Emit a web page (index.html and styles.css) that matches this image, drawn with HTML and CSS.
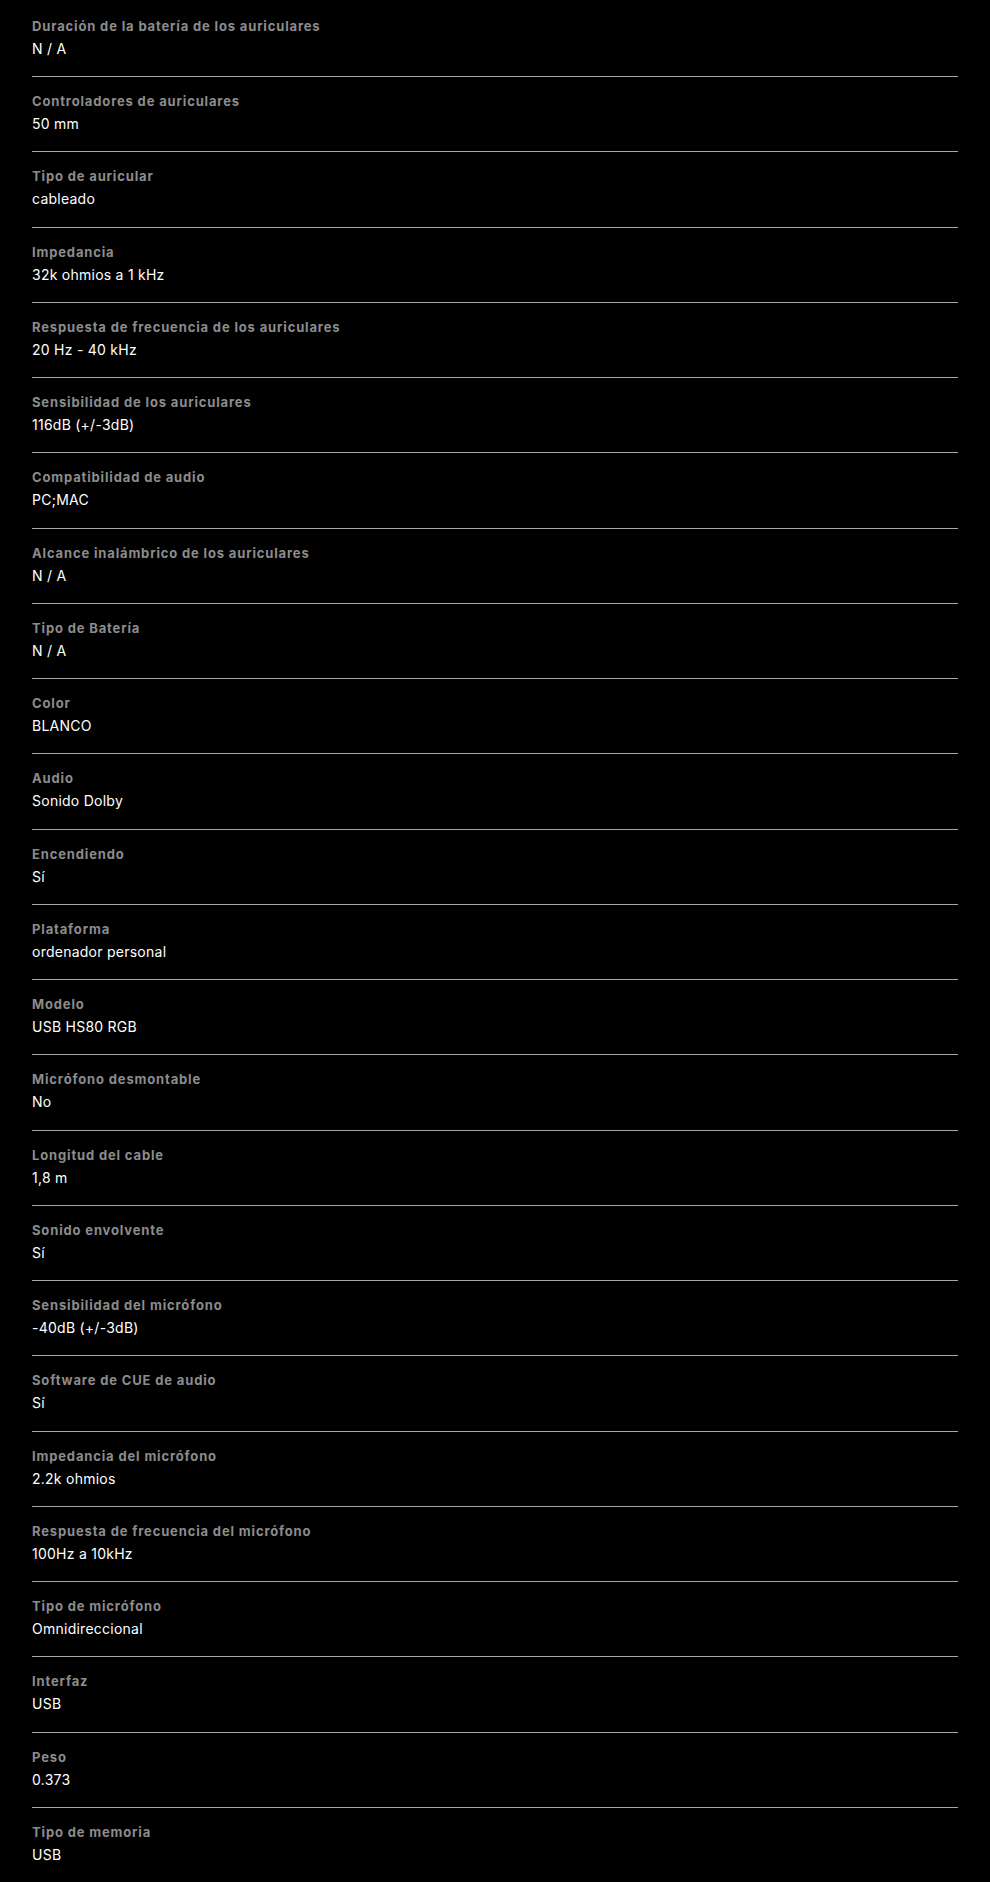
FILE: index.html
```html
<!DOCTYPE html>
<html lang="es">
<head>
<meta charset="utf-8">
<title>Especificaciones</title>
<link rel="stylesheet" href="styles.css">
</head>
<body>
<dl class="specs">
  <div class="row"><dt>Duración de la batería de los auriculares</dt><dd>N / A</dd></div>
  <div class="row"><dt>Controladores de auriculares</dt><dd>50 mm</dd></div>
  <div class="row"><dt>Tipo de auricular</dt><dd>cableado</dd></div>
  <div class="row"><dt>Impedancia</dt><dd>32k ohmios a 1 kHz</dd></div>
  <div class="row"><dt>Respuesta de frecuencia de los auriculares</dt><dd>20 Hz - 40 kHz</dd></div>
  <div class="row"><dt>Sensibilidad de los auriculares</dt><dd>116dB (+/-3dB)</dd></div>
  <div class="row"><dt>Compatibilidad de audio</dt><dd>PC;MAC</dd></div>
  <div class="row"><dt>Alcance inalámbrico de los auriculares</dt><dd>N / A</dd></div>
  <div class="row"><dt>Tipo de Batería</dt><dd>N / A</dd></div>
  <div class="row"><dt>Color</dt><dd>BLANCO</dd></div>
  <div class="row"><dt>Audio</dt><dd>Sonido Dolby</dd></div>
  <div class="row"><dt>Encendiendo</dt><dd>Sí</dd></div>
  <div class="row"><dt>Plataforma</dt><dd>ordenador personal</dd></div>
  <div class="row"><dt>Modelo</dt><dd>USB HS80 RGB</dd></div>
  <div class="row"><dt>Micrófono desmontable</dt><dd>No</dd></div>
  <div class="row"><dt>Longitud del cable</dt><dd>1,8 m</dd></div>
  <div class="row"><dt>Sonido envolvente</dt><dd>Sí</dd></div>
  <div class="row"><dt>Sensibilidad del micrófono</dt><dd>-40dB (+/-3dB)</dd></div>
  <div class="row"><dt>Software de CUE de audio</dt><dd>Sí</dd></div>
  <div class="row"><dt>Impedancia del micrófono</dt><dd>2.2k ohmios</dd></div>
  <div class="row"><dt>Respuesta de frecuencia del micrófono</dt><dd>100Hz a 10kHz</dd></div>
  <div class="row"><dt>Tipo de micrófono</dt><dd>Omnidireccional</dd></div>
  <div class="row"><dt>Interfaz</dt><dd>USB</dd></div>
  <div class="row"><dt>Peso</dt><dd>0.373</dd></div>
  <div class="row"><dt>Tipo de memoria</dt><dd>USB</dd></div>
</dl>
</body>
</html>
```
FILE: styles.css
```css
html, body {
  margin: 0;
  padding: 0;
  background: #000;
}
body {
  padding-top: 1.75px;
  font-family: Inter, "Noto Sans", "Liberation Sans", sans-serif;
  color: #fff;
}
.specs {
  margin: 0 0 0 32px;
  width: 926px;
  padding: 0;
}
.row {
  display: flex;
  flex-direction: column;
  gap: 5px;
  padding: 16px 0 17.25px;
  border-bottom: 1px solid #a8a8a8;
}
.row dt {
  margin: 0;
  font-size: 13px;
  line-height: 16px;
  font-weight: 700;
  letter-spacing: 0.85px;
  color: #8c8c8c;
}
.row dd {
  margin: 0;
  font-size: 14px;
  line-height: 20px;
  letter-spacing: 0.25px;
  color: #fff;
}
```
